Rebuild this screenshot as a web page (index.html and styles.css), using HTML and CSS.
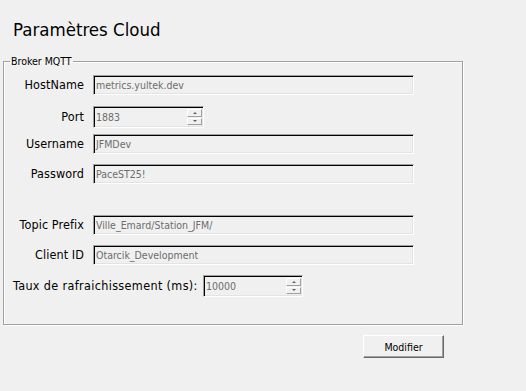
FILE: index.html
```html
<!DOCTYPE html>
<html lang="fr">
<head>
<meta charset="utf-8">
<title>Paramètres Cloud</title>
<link rel="stylesheet" href="styles.css">
</head>
<body>
<div class="page">
  <h1 class="title">Paramètres Cloud</h1>
  <fieldset class="group">
    <legend class="legend">Broker MQTT</legend>
    <div class="form">
      <div class="row">
        <span class="label">HostName</span>
        <div class="box box-text"><span class="value">metrics.yultek.dev</span></div>
      </div>
      <div class="row gap-11">
        <span class="label">Port</span>
        <div class="box box-spin box-port">
          <span class="value">1883</span>
          <div class="spin">
            <span class="spin-btn"><span class="arrow-up"></span></span>
            <span class="spin-btn"><span class="arrow-down"></span></span>
          </div>
        </div>
      </div>
      <div class="row gap-6">
        <span class="label">Username</span>
        <div class="box box-text"><span class="value">JFMDev</span></div>
      </div>
      <div class="row gap-10">
        <span class="label">Password</span>
        <div class="box box-text"><span class="value">PaceST25!</span></div>
      </div>
      <div class="row gap-31">
        <span class="label">Topic Prefix</span>
        <div class="box box-text"><span class="value">Ville_Emard/Station_JFM/</span></div>
      </div>
      <div class="row gap-10">
        <span class="label">Client ID</span>
        <div class="box box-text"><span class="value">Otarcik_Development</span></div>
      </div>
      <div class="row gap-10">
        <span class="label label-wide">Taux de rafraichissement (ms):</span>
        <div class="box box-spin box-rate">
          <span class="value">10000</span>
          <div class="spin">
            <span class="spin-btn"><span class="arrow-up"></span></span>
            <span class="spin-btn"><span class="arrow-down"></span></span>
          </div>
        </div>
      </div>
    </div>
  </fieldset>
  <div class="footer">
    <button class="btn" type="button">Modifier</button>
  </div>
</div>
</body>
</html>
```
FILE: styles.css
```css
html, body {
  margin: 0;
  padding: 0;
  background: #f0f0f0;
}
body {
  font-family: "DejaVu Sans Condensed", "DejaVu Sans", sans-serif;
  font-stretch: condensed;
  color: #000;
}
.page {
  padding: 19px 0 0 3px;
}
.title {
  margin: 0 0 14px 10px;
  font-size: 18.5px;
  line-height: 22px;
  font-weight: normal;
  color: #000;
}
.group {
  box-sizing: border-box;
  width: 460px;
  margin: 0;
  padding: 7px 0 27px 0;
  border: 1px solid #a0a0a0;
  box-shadow: 1px 1px 0 #fff, inset 1px 1px 0 #fff;
  min-inline-size: 0;
}
.legend {
  margin-left: 6px;
  padding: 0 1px;
  font-size: 10.5px;
  line-height: 13px;
  color: #000;
}
.form {
  display: flex;
  flex-direction: column;
}
.row {
  display: flex;
  align-items: center;
}
.gap-6 { margin-top: 6px; }
.gap-10 { margin-top: 10px; }
.gap-11 { margin-top: 11px; }
.gap-31 { margin-top: 31px; }
.label {
  width: 80px;
  margin-right: 9px;
  text-align: right;
  font-size: 12.5px;
  line-height: 14px;
  letter-spacing: 0.1px;
  white-space: nowrap;
  flex: none;
}
.label-wide {
  box-sizing: border-box;
  width: 199px;
  margin-right: 0;
  padding-left: 9px;
  text-align: left;
  letter-spacing: 0.35px;
}
.box {
  box-sizing: border-box;
  display: flex;
  align-items: center;
  border: 1px solid;
  border-color: #a0a0a0 #fff #fff #a0a0a0;
  box-shadow: inset 1px 1px 0 #000, inset -1px -1px 0 #e3e3e3;
  background: #f0f0f0;
  flex: none;
}
.box-text {
  width: 321px;
  height: 20px;
}
.box-spin {
  height: 22px;
}
.box-port { width: 111px; }
.box-rate { width: 100px; }
.value {
  flex: 1;
  padding-left: 2px;
  font-size: 10.5px;
  line-height: 13px;
  color: #6d6d6d;
  white-space: nowrap;
}
.spin {
  display: flex;
  flex-direction: column;
  gap: 1px;
  padding: 2px 1px 2px 0;
  height: 100%;
  box-sizing: border-box;
}
.spin-btn {
  box-sizing: border-box;
  width: 15px;
  flex: 1;
  display: flex;
  align-items: center;
  justify-content: center;
  background: #f0f0f0;
  border: 1px solid;
  border-color: #fff #a0a0a0 #a0a0a0 #fff;
}
.arrow-up {
  width: 0;
  height: 0;
  border-left: 2px solid transparent;
  border-right: 2px solid transparent;
  border-bottom: 2px solid #606060;
}
.arrow-down {
  width: 0;
  height: 0;
  border-left: 2px solid transparent;
  border-right: 2px solid transparent;
  border-top: 2px solid #606060;
}
.footer {
  width: 460px;
  display: flex;
  justify-content: flex-end;
  padding-right: 19px;
  box-sizing: border-box;
  margin-top: 10px;
}
.btn {
  box-sizing: border-box;
  width: 81px;
  height: 23px;
  padding: 0;
  background: #f0f0f0;
  border: 1px solid;
  border-color: #fff #696969 #696969 #fff;
  box-shadow: inset -1px -1px 0 #a0a0a0;
  font-family: "DejaVu Sans Condensed", "DejaVu Sans", sans-serif;
  font-stretch: condensed;
  font-size: 10.5px;
  color: #000;
}
```
